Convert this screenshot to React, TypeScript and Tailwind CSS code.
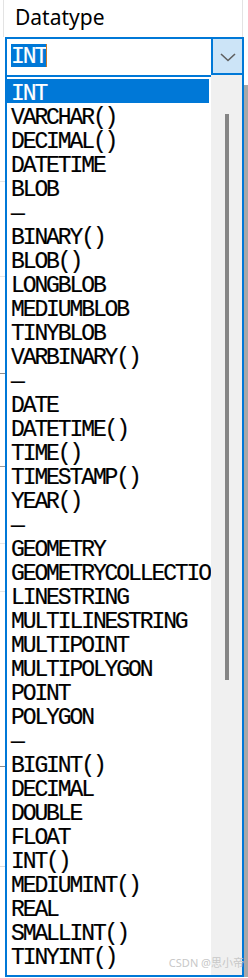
const types = [
  'INT', 'VARCHAR()', 'DECIMAL()', 'DATETIME', 'BLOB', '-',
  'BINARY()', 'BLOB()', 'LONGBLOB', 'MEDIUMBLOB', 'TINYBLOB', 'VARBINARY()', '-',
  'DATE', 'DATETIME()', 'TIME()', 'TIMESTAMP()', 'YEAR()', '-',
  'GEOMETRY', 'GEOMETRYCOLLECTION', 'LINESTRING', 'MULTILINESTRING', 'MULTIPOINT',
  'MULTIPOLYGON', 'POINT', 'POLYGON', '-',
  'BIGINT()', 'DECIMAL', 'DOUBLE', 'FLOAT', 'INT()', 'MEDIUMINT()', 'REAL', 'SMALLINT()', 'TINYINT()',
]

// rows of the table that peeks out on the left of the popup
const backRows = [
  { h: 105, c: 'border-[#e6e6e6]' },
  { h: 95, c: 'border-[#e6e6e6]' },
  { h: 97, c: 'border-[#8c8c8c]' },
  { h: 93, c: 'border-[#9a9a9a]' },
  { h: 77, c: 'border-[#e6e6e6]' },
  { h: 48, c: 'border-[#e6e6e6]' },
  { h: 175, c: 'border-[#8c8c8c]' },
  { h: 100, c: 'border-[#dcdcdc]' },
]

function Chevron() {
  return (
    <svg width="16" height="9" viewBox="0 0 16 9" fill="none">
      <polyline points="1,1 8,7.5 15,1" stroke="#5f5f5f" strokeWidth="1.6" />
    </svg>
  )
}

export default function App() {
  const mono = "font-['Liberation_Mono','Noto_Sans_CJK_SC',monospace] text-[23px] tracking-[-2.1px] [-webkit-text-stroke:0.2px_currentColor]"

  return (
    <div className="relative w-[248px] h-[978px] bg-white overflow-hidden">
      {/* label */}
      <div className="ml-[3px] w-[240px] h-[37px] border-x border-[#e3e3e3] pl-[11px] pt-[7px] text-[21px] leading-[21px] text-black font-['Noto_Sans',sans-serif]">
        Datatype
      </div>

      <div className="flex">
        {/* background table edge */}
        <div className="w-[5px] flex flex-col">
          <div className="h-[40px]" />
          {backRows.map((r, i) => (
            <div key={i} className={`border-b ${r.c}`} style={{ height: r.h }} />
          ))}
        </div>

        <div className="w-[239px] flex flex-col">
          {/* input row */}
          <div className="flex h-[40px]">
            <div className="w-[206px] h-[40px] border-t-2 border-l-2 border-b-2 border-[#0078d7] bg-white pl-[4px] pt-[5px] flex items-start">
              <span className={`${mono} h-[23px] leading-[26px] bg-[#0078d7] text-white`}>INT</span>
              <span className="w-[1px] h-[23px] bg-[#c8782a]" />
            </div>
            <div className="w-[33px] flex flex-col">
              <div className="h-[38px] border-2 border-[#0078d7] bg-[#cce4f7] flex items-center justify-center pt-[3px]">
                <Chevron />
              </div>
              <div className="h-[2px] bg-[#f0f0f0] border-r-2 border-[#0078d7]" />
            </div>
          </div>

          {/* list */}
          <div className="h-[900px] flex border-l-2 border-r-2 border-b-2 border-[#0078d7]">
            <div className="w-[204px] pt-[2px] overflow-hidden bg-white">
              {types.map((t, i) => (
                <div
                  key={i}
                  className={`${mono} h-[24px] pt-[3px] leading-[24px] pl-[4px] mr-[2px] whitespace-nowrap ${
                    i === 0 ? 'bg-[#0078d7] text-white' : 'text-black'
                  }`}
                >
                  {t === '-' ? '—' : t}
                </div>
              ))}
            </div>
            <div className="w-[31px] bg-[#f0f0f0] pt-[37px] pl-[14px]">
              <div className="w-[4px] h-[566px] bg-[#858585]" />
            </div>
          </div>
        </div>

        {/* drop shadow */}
        <div className="w-[4px] flex flex-col">
          <div className="h-[48px]" />
          <div className="flex-1 bg-[#a8a8a8]" />
        </div>
      </div>

      <div className="absolute right-[4px] bottom-[7px] text-[11px] text-[#c8c8c8] font-['Noto_Sans','Noto_Sans_CJK_SC',sans-serif]">
        CSDN @思小帝
      </div>
    </div>
  )
}
